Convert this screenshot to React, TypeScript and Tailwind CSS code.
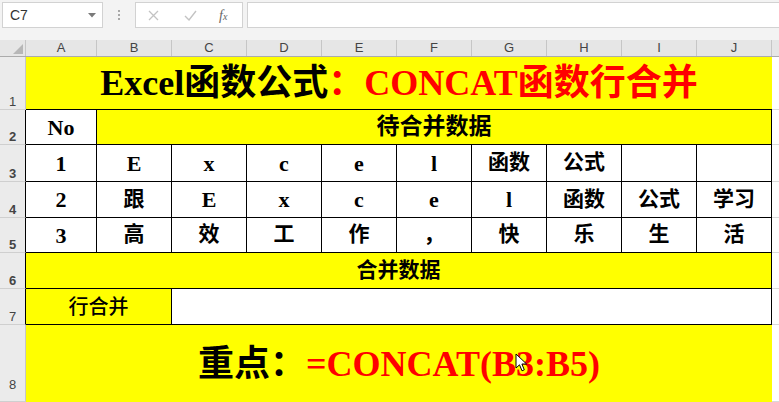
import React from 'react';

const COLS = ['A', 'B', 'C', 'D', 'E', 'F', 'G', 'H', 'I', 'J'];
const COL_W = ['w-[71px]', 'w-[75px]', 'w-[75px]', 'w-[75px]', 'w-[75px]', 'w-[75px]', 'w-[75px]', 'w-[75px]', 'w-[75px]', 'w-[75px]'];

const serif = 'font-["Liberation_Serif","Noto_Sans_CJK_SC",serif]';

const data: string[][] = [
    ['1', 'E', 'x', 'c', 'e', 'l', '函数', '公式', '', ''],
    ['2', '跟', 'E', 'x', 'c', 'e', 'l', '函数', '公式', '学习'],
    ['3', '高', '效', '工', '作', '，', '快', '乐', '生', '活'],
];

const isCjk = (s: string) => /[\u3000-\u9fff\uff00-\uffef]/.test(s);

const RowHead: React.FC<{ n: number; dark?: boolean; low?: boolean }> = ({ n, dark, low }) => (
    <div
        className={`w-[26px] shrink-0 bg-[#ebebeb] border-b border-b-[#cfcfcf] border-r flex items-end justify-center text-[13px] leading-none text-[#444] font-["Liberation_Sans",sans-serif] ${dark ? 'border-r-black' : 'border-r-[#c6c6c6]'} ${low ? 'pb-[10px]' : 'pb-[1px]'}`}
    >
        {n}
    </div>
);

const Filler: React.FC = () => <div className="flex-1 bg-white border-b border-[#d9d9d9]" />;

const Cursor: React.FC = () => (
    <svg className="absolute left-[515px] top-[353px]" width="13" height="20" viewBox="0 0 13 20">
        <path d="M1 1 L1 15 L4.5 11.8 L7 17.8 L9.3 16.8 L6.9 11 L11.6 11 Z" fill="#fff" stroke="#000" strokeWidth="1" strokeLinejoin="round" />
    </svg>
);

const App: React.FC = () => {
    return (
        <div className="relative w-[779px] h-[402px] overflow-hidden bg-white">
            {/* formula bar */}
            <div className="h-[40px] bg-[#f3f3f3] flex items-start pt-[2px] pl-[2px] font-['Liberation_Sans',sans-serif]">
                <div className="w-[101px] h-[26px] bg-white border border-[#d2d2d2] flex items-center justify-between pl-[7px] pr-[6px]">
                    <span className="text-[14px] text-[#333]">C7</span>
                    <svg width="8" height="5" viewBox="0 0 8 5">
                        <path d="M0 0 L8 0 L4 4.5 Z" fill="#7a7a7a" />
                    </svg>
                </div>
                <div className="w-[32px] h-[26px] flex flex-col items-center justify-center gap-[2px]">
                    <span className="w-[2px] h-[2px] bg-[#a8a8a8]" />
                    <span className="w-[2px] h-[2px] bg-[#a8a8a8]" />
                    <span className="w-[2px] h-[2px] bg-[#a8a8a8]" />
                </div>
                <div className="w-[108px] h-[26px] bg-white border border-[#d2d2d2] flex items-center">
                    <svg className="ml-[12px]" width="11" height="11" viewBox="0 0 11 11">
                        <path d="M1 1 L10 10 M10 1 L1 10" stroke="#c3c3c3" strokeWidth="1.3" />
                    </svg>
                    <svg className="ml-[25px]" width="13" height="11" viewBox="0 0 13 11">
                        <path d="M1 6 L5 10 L12 1" stroke="#c3c3c3" strokeWidth="1.4" fill="none" />
                    </svg>
                    <span className="ml-[22px] text-[14px] italic font-['Liberation_Serif',serif] text-[#666]">
                        f<span className="text-[10px]">x</span>
                    </span>
                </div>
                <div className="ml-[4px] flex-1 h-[26px] bg-white border border-[#d2d2d2] border-r-0" />
            </div>

            {/* column headers */}
            <div className="flex h-[17px] bg-[#e6e6e6] border-b border-[#ababab] font-['Liberation_Sans',sans-serif]">
                <div className="w-[26px] shrink-0 border-r border-[#c6c6c6] relative">
                    <svg className="absolute left-[13px] top-[4px]" width="10" height="10" viewBox="0 0 10 10">
                        <path d="M10 0 L10 10 L0 10 Z" fill="#b7b7b7" />
                    </svg>
                </div>
                {COLS.map((c, i) => (
                    <div
                        key={c}
                        className={`${COL_W[i]} shrink-0 border-r border-[#c6c6c6] flex items-center justify-center text-[13px] text-[#444]`}
                    >
                        {c}
                    </div>
                ))}
                <div className="flex-1" />
            </div>

            {/* row 1 */}
            <div className="flex h-[53px]">
                <RowHead n={1} />
                <div className={`w-[746px] shrink-0 bg-[#ffff00] border-b border-black flex items-center justify-center text-[36px] font-bold leading-none ${serif}`}>
                    <span className="text-black">Excel函数公式</span>
                    <span className="text-[#ff0000]">：CONCAT函数行合并</span>
                </div>
                <Filler />
            </div>

            {/* row 2 */}
            <div className={`flex h-[35px] ${serif} font-bold`}>
                <RowHead n={2} dark />
                <div className="w-[71px] shrink-0 bg-white border-r border-b border-black flex items-center justify-center text-[22px]">
                    No
                </div>
                <div className="w-[675px] shrink-0 bg-[#ffff00] border-r border-b border-black flex items-center justify-center text-[23px]">
                    待合并数据
                </div>
                <Filler />
            </div>

            {/* rows 3-5 */}
            {data.map((row, r) => (
                <div key={r} className={`flex ${r === 0 ? 'h-[37px]' : r === 1 ? 'h-[36px]' : 'h-[35px]'} ${serif} font-bold`}>
                    <RowHead n={r + 3} dark />
                    {row.map((v, i) => (
                        <div
                            key={i}
                            className={`${COL_W[i]} shrink-0 bg-white border-r border-b border-black flex items-center justify-center ${isCjk(v) ? 'text-[21px]' : 'text-[22px]'}`}
                        >
                            {v}
                        </div>
                    ))}
                    <Filler />
                </div>
            ))}

            {/* row 6 */}
            <div className={`flex h-[36px] ${serif} font-bold`}>
                <RowHead n={6} dark />
                <div className="w-[746px] shrink-0 bg-[#ffff00] border-r border-b border-black flex items-center justify-center text-[21px]">
                    合并数据
                </div>
                <Filler />
            </div>

            {/* row 7 */}
            <div className={`flex h-[36px] ${serif}`}>
                <RowHead n={7} dark />
                <div className="w-[146px] shrink-0 bg-[#ffff00] border-r border-b border-black flex items-center justify-center text-[20px] font-medium">
                    行合并
                </div>
                <div className="w-[600px] shrink-0 bg-white border-r border-b border-black" />
                <Filler />
            </div>

            {/* row 8 */}
            <div className="flex h-[77px]">
                <RowHead n={8} low />
                <div className={`w-[746px] shrink-0 bg-[#ffff00] flex items-center justify-center text-[36px] font-bold leading-none ${serif}`}>
                    <span className="text-black">重点：</span>
                    <span className="text-[#ff0000]">=CONCAT(B3:B5)</span>
                </div>
                <Filler />
            </div>

            <Cursor />
        </div>
    );
};

export default App;
